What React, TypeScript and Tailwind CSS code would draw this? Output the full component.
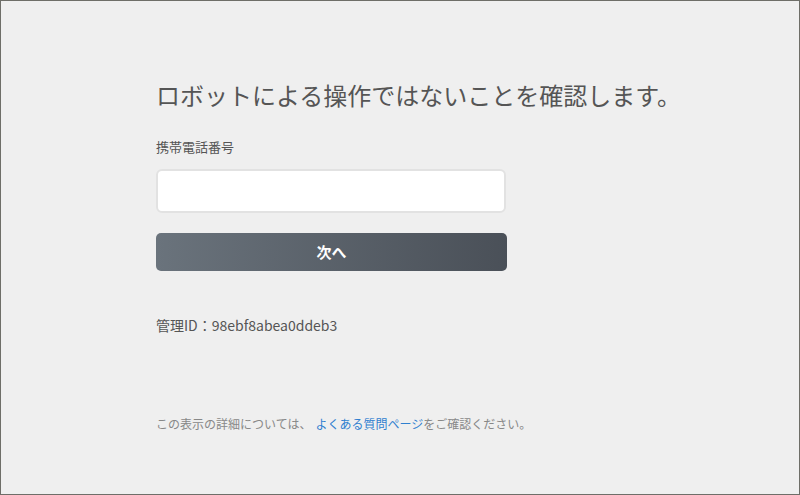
export default function App() {
  return (
    <div
      className="w-[800px] h-[495px] bg-[#efefef] border border-[#6e6e68] overflow-hidden"
      style={{ fontFamily: '"Noto Sans CJK JP", "Noto Sans", sans-serif' }}
    >
      <div className="w-[488px] mx-auto pt-[76px] ml-[155px]">
        <h1 className="text-[24px] leading-[36px] text-[#555] whitespace-nowrap font-normal">
          ロボットによる操作ではないことを確認します。
        </h1>

        <label className="block mt-[24px] text-[13px] leading-[20px] text-[#555]">携帯電話番号</label>
        <input
          type="tel"
          className="block mt-[12px] w-[350px] h-[44px] bg-white border-2 border-[#e2e2e2] rounded-[6px] px-3 outline-none"
        />

        <button className="block mt-[20px] w-[351px] h-[38px] rounded-[5px] bg-gradient-to-r from-[#6a737c] to-[#4a5058] text-white text-[15px] font-bold">
          次へ
        </button>

        <p className="mt-[44px] text-[14px] leading-[20px] text-[#555]">管理ID：98ebf8abea0ddeb3</p>

        <p className="mt-[80px] text-[12px] leading-[18px] text-[#888] whitespace-nowrap">
          この表示の詳細については、
          <a href="#" className="text-[#2f80cf] ml-[4px]">よくある質問ページ</a>
          をご確認ください。
        </p>
      </div>
    </div>
  )
}
